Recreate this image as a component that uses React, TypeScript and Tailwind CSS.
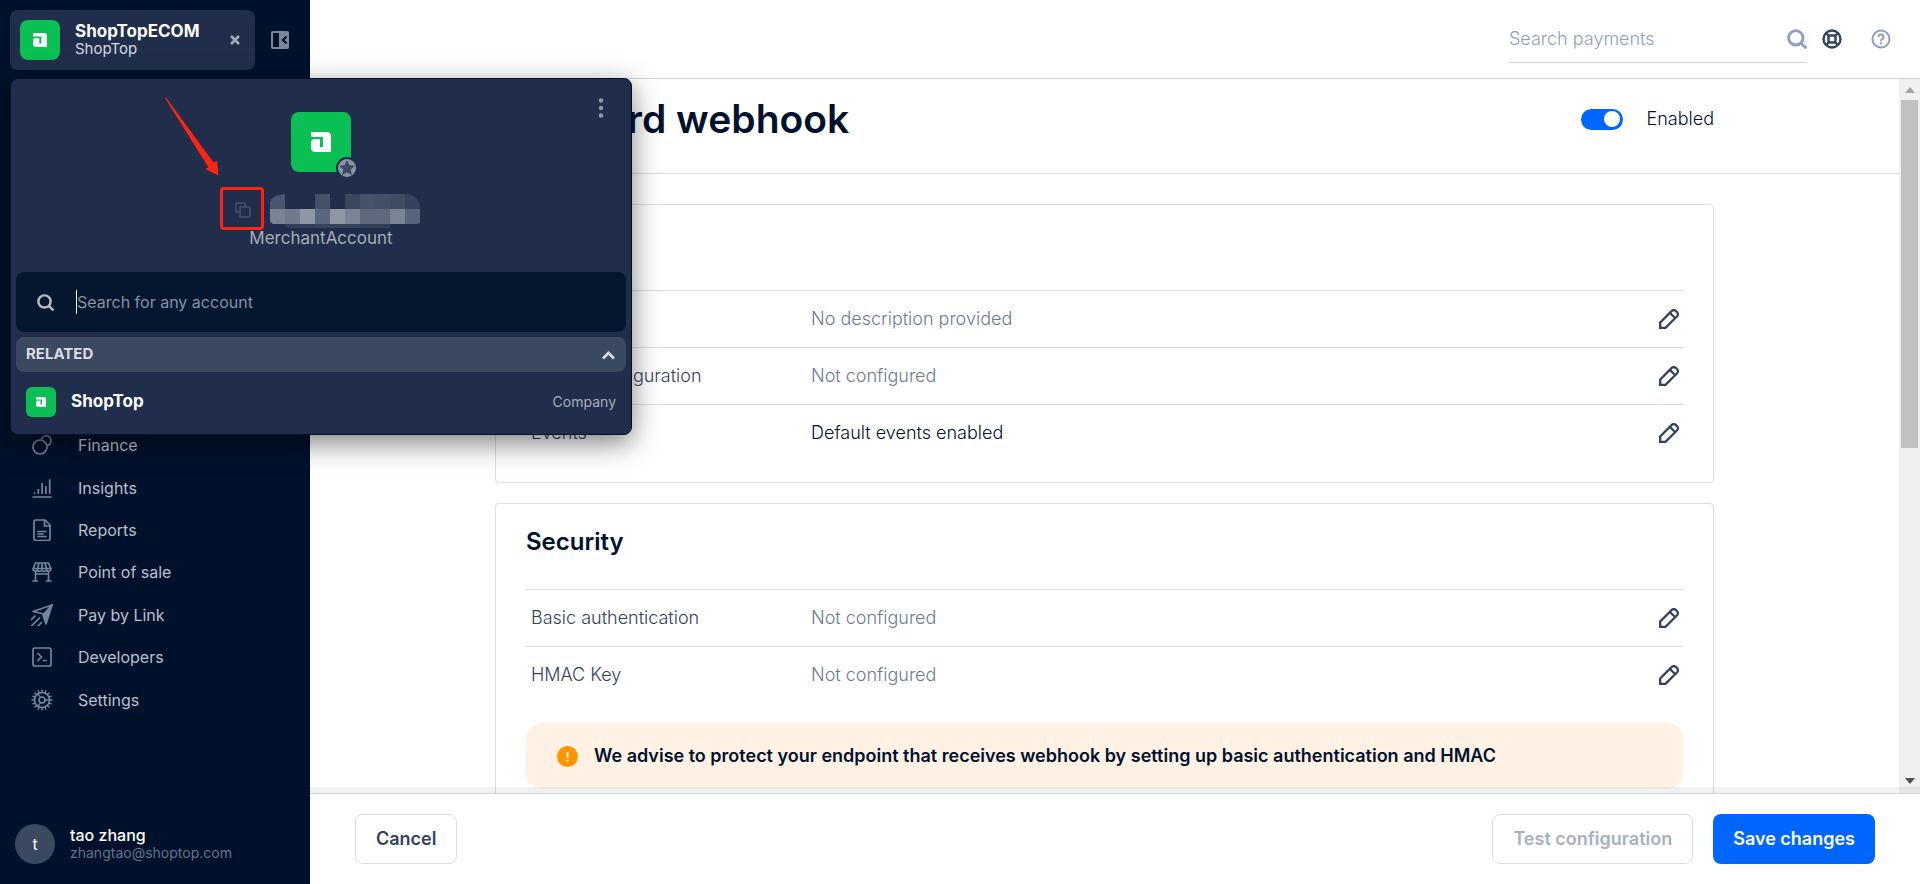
import type { ReactNode, SVGProps } from "react";

const navItems = [
  { label: "Finance", icon: <FinanceIcon /> },
  { label: "Insights", icon: <InsightsIcon /> },
  { label: "Reports", icon: <ReportsIcon /> },
  { label: "Point of sale", icon: <StoreIcon /> },
  { label: "Pay by Link", icon: <PlaneIcon /> },
  { label: "Developers", icon: <TerminalIcon /> },
  { label: "Settings", icon: <GearIcon /> },
];

const generalRows = [
  { label: "Description", value: "No description provided", muted: true },
  { label: "Server configuration", value: "Not configured", muted: true },
  { label: "Events", value: "Default events enabled", muted: false },
];

const securityRows = [
  { label: "Basic authentication", value: "Not configured", muted: true },
  { label: "HMAC Key", value: "Not configured", muted: true },
];

// [column, row, colour] of the blocks that hide the account name
const maskBlocks: [number, number, string][] = [
  [0, 0, "#4a566e"], [3, 0, "#465168"], [5, 0, "#3b475f"], [6, 0, "#475268"],
  [7, 0, "#445068"], [8, 0, "#3f4c64"], [9, 0, "#35425b"],
  [0, 1, "#7b8496"], [1, 1, "#6f7a8f"], [2, 1, "#8f97a5"], [3, 1, "#5a667e"], [4, 1, "#8f97a5"],
  [5, 1, "#7b8496"], [6, 1, "#5e697d"], [7, 1, "#5e697d"], [8, 1, "#7b8496"], [9, 1, "#58647a"],
  [1, 2, "#303e58"], [2, 2, "#303e58"], [3, 2, "#35435c"], [4, 2, "#35435c"],
  [5, 2, "#35435c"], [6, 2, "#303e58"], [7, 2, "#303e58"],
];

function Icon({ children, ...props }: SVGProps<SVGSVGElement>) {
  return (
    <svg width="22" height="22" viewBox="0 0 22 22" fill="none" stroke="currentColor" strokeWidth="1.7" strokeLinecap="round" strokeLinejoin="round" aria-hidden="true" {...props}>
      {children}
    </svg>
  );
}

function FinanceIcon() {
  return (
    <Icon>
      <circle cx="9" cy="13" r="7" />
      <path d="M10.500 4.800A5 5 0 1 1 16.800 11.400" />
    </Icon>
  );
}

function InsightsIcon() {
  return (
    <Icon>
      <path d="M2 20h18M3.500 15.800v.4M7.300 12.500v3.700M11.100 6.500v9.700M14.900 9.500v6.700M18.700 3v13.200" />
    </Icon>
  );
}

function ReportsIcon() {
  return (
    <Icon>
      <path d="M4.500 1h9.500l5 5v13.500a2 2 0 0 1-2 2H5a2 2 0 0 1-2-2V2.500A1.500 1.500 0 0 1 4.500 1z" />
      <path d="M13.500 1.500V7H19M7 12.500h8M7 15h5M7 17.500h8" />
    </Icon>
  );
}

function StoreIcon() {
  return (
    <Icon>
      <path d="M4.500 2h13L20 8a2.400 2.400 0 0 1-4.500 1 2.500 2.500 0 0 1-4.500 0 2.500 2.500 0 0 1-4.500 0A2.400 2.400 0 0 1 2 8zM2 7.500h18M8 2L6.500 7.500V9M14 2l1.500 5.500V9M11 2v7M4.500 11v8.500M17.500 11v8.500M2 20h4.500M15.500 20H20M4.500 13h13" />
    </Icon>
  );
}

function PlaneIcon() {
  return (
    <Icon>
      <path d="M21 1L2 7.500l11 2.500z" />
      <path d="M21 1l-6 19-3-9z" fill="currentColor" />
      <path d="M4 12l-3.500 3.500M8.500 14l-8 8M10.500 18.500L7 22" />
    </Icon>
  );
}

function TerminalIcon() {
  return (
    <Icon>
      <rect x="2" y="2" width="18" height="18" rx="2" />
      <path d="M7 7.500l3.500 3.500L7 14.500M12.500 14.500H15" />
    </Icon>
  );
}

function GearIcon() {
  return (
    <Icon>
      <circle cx="11" cy="11" r="7.500" />
      <circle cx="11" cy="11" r="3" />
      <path d="M11 1v2.500M11 18.500V21M1 11h2.500M14 11h7M3.900 3.900l1.800 1.800M16.300 16.300l1.800 1.800M3.900 18.100l1.800-1.800M16.300 5.700l1.800-1.800M7.200 1.800l.9 2.200M13.900 18l.9 2.200M14.800 1.800l-.9 2.200M8.100 18l-.9 2.200M1.800 7.200l2.200.9M18 13.900l2.200.9M1.800 14.800l2.200-.9M18 8.100l2.200-.9M9.500 8.400L7 4.800M9.500 13.600L7 17.200" strokeWidth="1.400" />
    </Icon>
  );
}

function SearchIcon({ className }: { className: string }) {
  return (
    <svg className={className} viewBox="0 0 20 20" fill="none" stroke="currentColor" strokeWidth="2.900" aria-hidden="true">
      <circle cx="8.800" cy="8.800" r="7.200" />
      <path d="M14 14l5.300 5.300" />
    </svg>
  );
}

function PencilIcon() {
  return (
    <svg className="size-5" viewBox="0 0 20 20" fill="none" stroke="currentColor" strokeWidth="2.300" aria-hidden="true">
      <path d="M1.200 18.800v-5.300L12.800 1.900a2.800 2.800 0 0 1 4 0l1.300 1.300a2.800 2.800 0 0 1 0 4L6.500 18.800zM11 4l5 5" />
    </svg>
  );
}

function Logo({ className, markClassName }: { className: string; markClassName: string }) {
  return (
    <span className={`flex shrink-0 items-center justify-center bg-[#0abf53] ${className}`}>
      <svg className={markClassName} viewBox="0 0 20 20" fill="#fff" aria-hidden="true">
        <path d="M0 0H15.500Q20 0 20 4.500V20H4.500Q0 20 0 15.500V11Q0 7 4 7H9V15H12V5H0Z" />
      </svg>
    </span>
  );
}

function AccountMenu() {
  return (
    <div className="absolute left-[10px] top-[78px] z-20 w-[622px] rounded-lg border border-[#00112c] bg-[#202e4b] px-[5px] pb-1 shadow-[0_8px_28px_rgba(0,0,0,0.5)]">
      <div className="relative flex h-[193px] flex-col items-center pt-[33px]">
        <button type="button" aria-label="More options" className="absolute right-[19px] top-[18px] text-[#8f99ab]">
          <svg width="12" height="22" viewBox="0 0 12 22" fill="currentColor" aria-hidden="true">
            <circle cx="6" cy="3.500" r="2.200" />
            <circle cx="6" cy="11" r="2.200" />
            <circle cx="6" cy="18.500" r="2.200" />
          </svg>
        </button>
        <div className="relative">
          <Logo className="size-[60px] rounded-lg" markClassName="size-5" />
          <svg className="absolute -bottom-[7px] -right-[7px]" width="22" height="22" viewBox="0 0 22 22" aria-hidden="true">
            <circle cx="11" cy="11" r="11" fill="#202e4b" />
            <circle cx="11" cy="11" r="9" fill="#8a94a8" />
            <path d="M11 3l2.300 5.300 5.700.5-4.300 3.800 1.300 5.600-5-3-5 3 1.300-5.600L3 8.800l5.700-.5z" fill="#3c4963" />
          </svg>
        </div>
        <div className="flex items-center gap-[6px] self-start pl-[204px] pt-[15px]">
          <button type="button" aria-label="Copy account name" className="flex h-[43px] w-11 items-center justify-center rounded-sm border-[3px] border-[#ff2314] text-[#3c4a63]">
            <svg width="18" height="18" viewBox="0 0 18 18" fill="none" stroke="currentColor" strokeWidth="2" aria-hidden="true">
              <path d="M6 12H4a1 1 0 0 1-1-1V4a1 1 0 0 1 1-1h7a1 1 0 0 1 1 1v2" />
              <rect x="7" y="7" width="10" height="10" rx="1" />
            </svg>
          </button>
          <svg width="150" height="38" viewBox="0 -4 150 38" aria-hidden="true">
            <clipPath id="mask">
              <path d="M14 0H138Q150 3 150 15V28Q150 30 146 30H120V34H20Q0 32 0 26V8Q2 1 14 0Z" />
            </clipPath>
            <g clipPath="url(#mask)">
              {maskBlocks.map(([col, row, fill]) => (
                <rect key={`${col}-${row}`} x={col * 15} y={row * 15} width="15" height="15" fill={fill} />
              ))}
            </g>
          </svg>
        </div>
        <p className="text-[17px] leading-4 text-[#a6adba]">MerchantAccount</p>
        <svg className="absolute left-[149px] top-[18px]" width="60" height="80" viewBox="0 0 60 80" fill="#ff2314" aria-hidden="true">
          <path d="M0 1L1 .500 48.500 65.500 52 63.500 53.500 78.500 40 72 43.500 70.500z" />
        </svg>
      </div>

      <label className="flex h-[60px] items-center rounded-lg bg-[#05162f] px-[21px] text-[#b5bcc8]">
        <SearchIcon className="size-[17px]" />
        <span className="ml-[22px] h-6 w-px bg-white" />
        <input type="text" aria-label="Search for any account" placeholder="Search for any account" className="min-w-0 flex-1 bg-transparent text-base outline-none placeholder:text-[#8791a2]" />
      </label>

      <button type="button" className="mt-[5px] flex h-[35px] w-full items-center justify-between rounded-lg bg-[#3a4860] px-[10px] text-[15px] font-bold text-[#d9dce2]">
        RELATED
        <svg width="15" height="10" viewBox="0 0 15 10" fill="none" stroke="currentColor" strokeWidth="2.800" aria-hidden="true">
          <path d="M2 8.500l5.500-5.500L13 8.500" />
        </svg>
      </button>

      <a href="#shoptop" className="flex h-[58px] items-center px-[10px] pt-[2px]">
        <Logo className="size-[30px] rounded-md" markClassName="size-[10px]" />
        <span className="ml-[15px] text-[17px] font-bold text-white">ShopTop</span>
        <span className="ml-auto text-sm text-[#a6adba]">Company</span>
      </a>
    </div>
  );
}

function Sidebar() {
  return (
    <aside className="flex w-[310px] shrink-0 flex-col bg-[#00112c]">
      <div className="flex items-center gap-4 p-[10px]">
        <button type="button" className="flex h-[60px] w-[245px] items-center rounded-lg bg-[#202e4b] pl-[10px] pr-[15px] text-left">
          <Logo className="size-10 rounded-lg" markClassName="size-[14px]" />
          <span className="ml-[15px] flex flex-col pb-[2px]">
            <span className="text-[17px] font-bold leading-5 text-white">ShopTopECOM</span>
            <span className="text-[15px] leading-4 text-[#d5d9e0]">ShopTop</span>
          </span>
          <svg className="ml-auto" width="10" height="10" viewBox="0 0 10 10" stroke="#a6adba" strokeWidth="2.600" aria-hidden="true">
            <path d="M1 1l8 8M9 1L1 9" />
          </svg>
        </button>
        <button type="button" aria-label="Collapse menu" className="text-[#7b879b]">
          <svg width="18" height="18" viewBox="0 0 18 18" aria-hidden="true">
            <path fillRule="evenodd" d="M2 0h14a2 2 0 0 1 2 2v14a2 2 0 0 1-2 2H2a2 2 0 0 1-2-2V2a2 2 0 0 1 2-2zM2 2v14h6V2z" fill="currentColor" />
            <path d="M15.500 5.500L12 9l3.500 3.500" fill="none" stroke="#00112c" strokeWidth="2.200" />
          </svg>
        </button>
      </div>

      <nav className="mt-[344px] grid h-[297px] auto-rows-fr">
        {navItems.map((item) => (
          <a key={item.label} href="#nav" className="flex items-center gap-[25px] pl-[31px] text-base text-[#b9c0cb]">
            <span className="text-[#76839a]">{item.icon}</span>
            {item.label}
          </a>
        ))}
      </nav>

      <div className="mt-auto flex items-center gap-[15px] px-[15px] pb-5">
        <span className="flex size-10 items-center justify-center rounded-full bg-[#3a4860] text-base text-white">t</span>
        <div className="pb-[2px]">
          <p className="text-base font-medium leading-5 text-white">tao zhang</p>
          <p className="text-sm leading-4 text-[#66738a]">zhangtao@shoptop.com</p>
        </div>
      </div>
    </aside>
  );
}

function TopBar() {
  return (
    <header className="flex h-[79px] shrink-0 items-center justify-end border-b border-[#ccd3db] pr-[29px] text-[#8fa0c0]">
      <label className="flex h-12 w-[298px] items-center border-b border-[#ccd3db]">
        <input type="search" aria-label="Search payments" placeholder="Search payments" className="min-w-0 flex-1 bg-transparent text-lg font-light outline-none placeholder:text-[#8fa0c0]" />
        <SearchIcon className="size-5" />
      </label>
      <button type="button" aria-label="Support" className="ml-[15px] text-[#33425e]">
        <svg width="20" height="20" viewBox="0 0 20 20" fill="none" stroke="currentColor" strokeWidth="2.400" aria-hidden="true">
          <circle cx="10" cy="10" r="8.500" />
          <rect x="6.500" y="6.500" width="7" height="7" rx="2" />
          <path d="M4 4l3 3M16 4l-3 3M4 16l3-3M16 16l-3-3" />
        </svg>
      </button>
      <button type="button" aria-label="Help" className="ml-[29px]">
        <svg width="20" height="20" viewBox="0 0 20 20" fill="none" stroke="currentColor" strokeWidth="2" aria-hidden="true">
          <circle cx="10" cy="10" r="8.500" />
          <path d="M7.500 8a2.500 2.500 0 1 1 3.600 2.200Q10 10.800 10 12" />
          <path d="M10 13.200v2" />
        </svg>
      </button>
    </header>
  );
}

function SettingsCard({ title, rows, children }: { title: string; rows: typeof generalRows; children?: ReactNode }) {
  return (
    <section className="rounded border border-[#dbdee2] px-[30px] pb-[21px]">
      <h2 className="h-[85px] pt-[22px] text-2xl font-semibold leading-8 text-[#00112c]">{title}</h2>
      <dl>
        {rows.map((row) => (
          <div key={row.label} className="flex h-[57px] items-center border-t border-[#dbdee2] pl-[5px] pr-1 text-lg font-light">
            <dt className="w-[280px] text-[#33425e]">{row.label}</dt>
            <dd className={row.muted ? "flex-1 text-[#6d7b90]" : "flex-1 text-[#00112c]"}>{row.value}</dd>
            <dd className="flex">
              <button type="button" aria-label={`Edit ${row.label}`} className="text-[#33425e]">
                <PencilIcon />
              </button>
            </dd>
          </div>
        ))}
      </dl>
      {children}
    </section>
  );
}

function ScrollBar() {
  return (
    <div className="flex w-[21px] shrink-0 flex-col items-center bg-[#f0f0f0]" aria-hidden="true">
      <svg className="mt-2 shrink-0" width="10" height="6" viewBox="0 0 10 6" fill="#a3a3a3">
        <path d="M5 0l5 6H0z" />
      </svg>
      <div className="mt-[7px] h-[348px] w-[17px] shrink-0 bg-[#c1c1c1]" />
      <svg className="mb-[9px] mt-auto shrink-0" width="10" height="6" viewBox="0 0 10 6" fill="#505050">
        <path d="M0 0h10L5 6z" />
      </svg>
    </div>
  );
}

export default function App() {
  return (
    <div className="relative flex h-screen overflow-hidden bg-white font-[Inter,'Liberation_Sans',sans-serif] text-[#00112c]">
      <Sidebar />
      <AccountMenu />

      <div className="flex min-w-0 flex-1 flex-col">
        <TopBar />

        <div className="relative flex min-h-0 flex-1">
          <main className="min-w-0 flex-1 overflow-hidden">
            <div className="border-b border-[#dbdee2]">
              <div className="mx-auto flex h-[94px] max-w-[1219px] items-center justify-between pb-[14px]">
                <h1 className="text-[39px] font-semibold leading-[48px]">Standard webhook</h1>
                <label className="flex items-center gap-6 text-lg font-light">
                  <input type="checkbox" role="switch" defaultChecked className="peer sr-only" />
                  <span className="flex h-[21px] w-[42px] items-center justify-end rounded-full bg-[#0066ff] p-[3px]">
                    <span className="size-4 rounded-full bg-white" />
                  </span>
                  Enabled
                </label>
              </div>
            </div>

            <div className="mx-auto mt-[30px] flex max-w-[1219px] flex-col gap-5">
              <SettingsCard title="General" rows={generalRows} />
              <SettingsCard title="Security" rows={securityRows}>
                <div role="alert" className="mt-5 flex h-[66px] items-center gap-4 rounded-2xl bg-[#fff2e5] px-[31px] text-lg font-semibold">
                  <svg width="21" height="21" viewBox="0 0 21 21" aria-hidden="true">
                    <circle cx="10.500" cy="10.500" r="10.500" fill="#ff9600" />
                    <path d="M10.500 6v5.500M10.500 13.500v2" stroke="#fff" strokeWidth="1.800" />
                  </svg>
                  We advise to protect your endpoint that receives webhook by setting up basic authentication and HMAC
                </div>
              </SettingsCard>
            </div>
          </main>
          <ScrollBar />
          <div className="absolute inset-x-0 bottom-0 h-[6px] bg-[#00112c]/[0.06]" />
        </div>

        <footer className="flex h-[91px] shrink-0 items-center gap-5 border-t border-[#d3d6db] px-[45px] text-lg font-semibold">
          <button type="button" className="h-[50px] rounded-lg border border-[#dbdee2] px-5 text-[#33425e]">
            Cancel
          </button>
          <button type="button" disabled className="ml-auto h-[50px] rounded-lg border border-[#dbdee2] px-5 text-[#a6b0c0]">
            Test configuration
          </button>
          <button type="button" className="h-[50px] rounded-lg bg-[#0066ff] px-5 text-white">
            Save changes
          </button>
        </footer>
      </div>
    </div>
  );
}
